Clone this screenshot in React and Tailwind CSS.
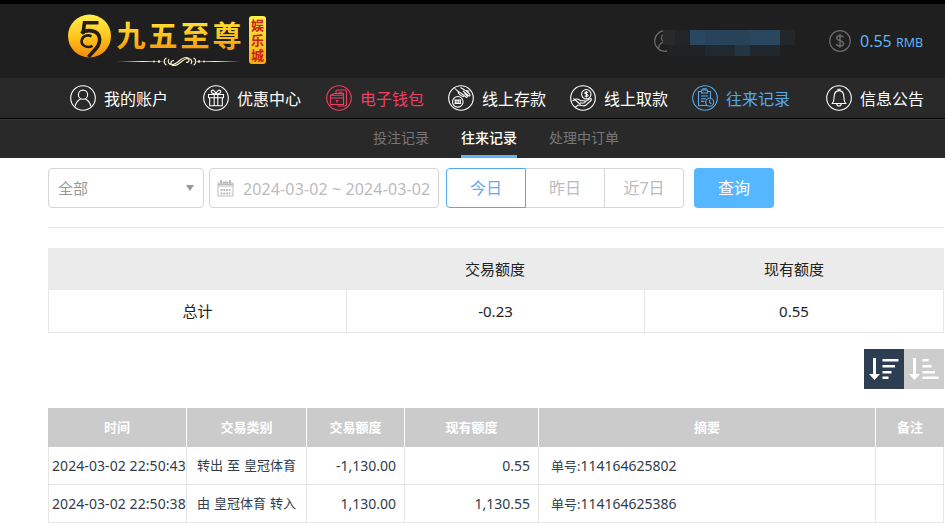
import clsx from 'clsx'

const navItems = [
  { icon: 'user', label: '我的账户', className: 'text-white' },
  { icon: 'gift', label: '优惠中心', className: 'ml-[35px] text-white' },
  { icon: 'wallet', label: '电子钱包', className: 'ml-[25px] text-[#ef3e62]' },
  { icon: 'deposit', label: '线上存款', className: 'ml-6 text-white' },
  { icon: 'withdraw', label: '线上取款', className: 'ml-6 text-white' },
  { icon: 'record', label: '往来记录', className: 'ml-6 text-[#56a9e8]' },
  { icon: 'bell', label: '信息公告', className: 'ml-9 text-white' },
]

const rows = [
  { time: '2024-03-02 22:50:43', type: '转出 至 皇冠体育', amount: '-1,130.00', balance: '0.55', order: '114164625802' },
  { time: '2024-03-02 22:50:38', type: '由 皇冠体育 转入', amount: '1,130.00', balance: '1,130.55', order: '114164625386' },
]

const iconPaths = {
  user: (
    <>
      <circle cx="13" cy="9.7" r="4.6" />
      <path d="M5.2 21.3c.8-4 3-6 5.400-7.200M20.800 21.300c-.8-4-3-6-5.400-7.200" />
    </>
  ),
  gift: (
    <>
      <path d="M5.500 9.500h15v3.300h-15zM6.700 12.800h12.600v8H6.700zM11.200 9.500v11.300M14.800 9.500v11.300" />
      <path d="M13 9.200C10 9 7.200 7.500 8.500 5.700c1.500-1.500 4 .8 4.500 3.500 .5-2.700 3-5 4.500-3.500 1.300 1.800-1.500 3.300-4.500 3.500z" />
    </>
  ),
  wallet: (
    <>
      <path d="M10 8V6.500Q10 5 11.500 5h7.500q1.500 0 1.500 1.500v13Q20.500 21 19 21h-7.500" />
      <path d="M4.500 10.300h13v9.200h-13zM4.500 13h13M12.500 7.300h4M10 15.500h2.500M11 15.500v2.200" />
      <path d="M4.500 10.300L8.500 8.500h9V14" />
    </>
  ),
  deposit: (
    <>
      <circle cx="9.800" cy="16.800" r="5.300" />
      <path d="M6.500 15h6.600M6.500 18.500h6.600M7.300 15v3.500M9 15v3.500M10.700 15v3.500M12.400 15v3.500" />
      <path d="M7 3.500c2.200 2.700 4 3.500 6.500 5l4.700 3.700c1.300.6 1.600-.7.700-1.700l-2.400-2.100M15 6l5.500 4.700c1.300.7 2-.3 1.100-1.500L18 5.500M12.500 2.500l4.500 2.800 4.500 1" />
      <path d="M10 6.700c.5 2.800 3.700 4.700 6 5" />
    </>
  ),
  withdraw: (
    <>
      <circle cx="16.300" cy="9.200" r="4.700" />
      <path d="M18 7.700c-.6-1-3.200-1-3.200.4 0 1.500 3.300.8 3.300 2.400 0 1.300-2.700 1.300-3.400.3M16.400 6v6.500" />
      <path d="M2.500 16l3-1.800c2.500-.8 3.500.5 5 1.600h3.500c1.600.2 1.500 2 0 2.200H10M14.800 16.800l5-3c1.500-.5 2.200.7 1.100 1.700l-5.300 4.800q-1 .8-2.500.5l-5-.8-2.800 2.200" />
      <path d="M3.500 13.500l7 6" />
    </>
  ),
  record: (
    <>
      <path d="M9.500 6.500H6.500v14h8.500M15.500 6.500h3V13M9.500 5h6v3h-6zM11 5V3.800h3V5" />
      <path d="M9 11h7M9 13.700h5M9 16.400h3.500" />
      <circle cx="17.700" cy="17.200" r="4" />
      <path d="M17.700 14.800v2.700l1.700 1.300" />
    </>
  ),
  bell: (
    <path d="M6.300 18.500c1.800-2.200 1.800-3 1.800-6.200 0-4 2-6.700 4.900-6.700s4.900 2.700 4.900 6.700c0 3.200 0 4 1.800 6.200zM12 5.600V4.300h2v1.300M10.800 18.700c0 3 4.400 3 4.400 0" />
  ),
}

function NavIcon({ name }) {
  return (
    <svg width="26" height="26" viewBox="0 0 26 26" fill="none" stroke="currentColor" strokeWidth="1.1" className="shrink-0">
      <circle cx="13" cy="13" r="12.300" />
      {iconPaths[name]}
    </svg>
  )
}

function Logo() {
  return (
    <svg width="200" height="56" viewBox="67 12 200 56" className="shrink-0">
      <defs>
        <linearGradient id="gold" x1="0" y1="0" x2="0" y2="1">
          <stop offset="0" stopColor="#fff04a" />
          <stop offset="0.55" stopColor="#ffc21a" />
          <stop offset="1" stopColor="#f58a0c" />
        </linearGradient>
        <linearGradient id="badge" x1="0" y1="0" x2="0" y2="1">
          <stop offset="0" stopColor="#fff04a" />
          <stop offset="1" stopColor="#fbab14" />
        </linearGradient>
        <linearGradient id="line" x1="0" y1="0" x2="1" y2="0">
          <stop offset="0" stopColor="#e9d58a" stopOpacity="0" />
          <stop offset="0.5" stopColor="#fff6cf" />
          <stop offset="1" stopColor="#e9d58a" stopOpacity="0" />
        </linearGradient>
      </defs>
      <circle cx="89.500" cy="36" r="21.500" fill="url(#gold)" />
      <g fill="none" stroke="#221d12">
        <path d="M98.500 22.800H84.500L83 33.500" strokeWidth="3.600" />
        <path d="M81.500 33.500C85 29.500 99.500 28.500 99.700 39.500 99.700 47 94 50 88.500 57" strokeWidth="3.600" />
        <path d="M92.500 45.800C86 49 80.500 44.500 81.800 39.800 83 35.500 88 34.300 91.500 36.300" strokeWidth="2.600" />
      </g>
      <text
        x="116.500 148.500 180.500 212.500"
        y="47"
        fontSize="29"
        fontWeight="700"
        fill="url(#gold)"
        className="font-['Noto_Sans_CJK_SC',sans-serif]"
      >
        九五至尊
      </text>
      <rect x="117" y="61" width="52" height="1" fill="url(#line)" />
      <rect x="189" y="61" width="52" height="1" fill="url(#line)" />
      <g fill="none" stroke="#f7efc8" strokeWidth="1.200">
        <path d="M166.500 58c-3 1-3 6 0 7M169 59c-2 3 0 5.500 3 5.500 6 0 8-7 14-7 4 0 4 5 0 5M193.500 58c3 1 3 6 0 7M191 64c2-3 0-5.500-3-5.500-6 0-8 7-14 7-4 0-4-5 0-5" />
      </g>
      <g fill="#f7efc8">
        <circle cx="154" cy="61.500" r="1" />
        <circle cx="159" cy="61.500" r="1.300" />
        <circle cx="199" cy="61.500" r="1.300" />
        <circle cx="204" cy="61.500" r="1" />
      </g>
      <rect x="249" y="16" width="17" height="48" rx="3" fill="url(#badge)" />
      <text
        x="251 251 251"
        y="30 45 60"
        fontSize="13"
        fontWeight="700"
        fill="#c9200c"
        className="font-['Noto_Sans_CJK_SC',sans-serif]"
      >
        娱乐城
      </text>
    </svg>
  )
}

function Header() {
  return (
    <header className="flex h-[78px] border-t-4 border-black bg-[#1f1f1f] pt-2 pl-[67px]">
      <Logo />
      <div className="ml-[387px] flex h-[58px] items-center">
        <div className="relative h-[26px] w-[141px]">
          <svg width="22" height="22" viewBox="0 0 22 22" fill="none" stroke="#6a6a6a" strokeWidth="1.200" className="mt-0.5">
            <circle cx="11" cy="11" r="10.300" />
            <circle cx="11" cy="8" r="3.600" />
            <path d="M4.500 18c.8-3.300 2.500-5 4.500-6" />
          </svg>
          {/* Masked user name */}
          <div className="absolute top-0.5 left-[9px]">
            <div className="flex h-[15px]">
              <span className="w-3 bg-[#292929]" />
              <span className="w-[15px] bg-[#222426]" />
              <span className="w-[15px] bg-[#284761]" />
              <span className="w-[15px] bg-[#29445a]" />
              <span className="w-[30px] bg-[#27435a]" />
              <span className="w-[15px] bg-[#294860]" />
              <span className="w-[15px] bg-[#29475f]" />
              <span className="w-[15px] bg-[#22272c]" />
            </div>
            <div className="flex h-[11px] pl-1">
              <span className="w-[38px] bg-[#202224]" />
              <span className="w-[30px] bg-[#202930]" />
              <span className="w-[15px] bg-[#243542]" />
              <span className="w-[30px] bg-[#20272d]" />
            </div>
          </div>
        </div>
        <svg width="22" height="22" viewBox="0 0 22 22" fill="none" stroke="#6a6a6a" strokeWidth="1.200" className="ml-[34px]">
          <circle cx="11" cy="11" r="10.300" />
          <path d="M14.500 7.500C13.500 5 7.800 5.200 7.800 8c0 3.200 6.800 2.400 6.800 5.800 0 3-6.200 3-7.200.2M11 3.800v14" strokeWidth="1.500" />
        </svg>
        <span className="ml-[9px] text-[16px] text-[#5bb4f5]">
          0.55 <span className="text-[12.5px]">RMB</span>
        </span>
      </div>
    </header>
  )
}

function SubNav() {
  return (
    <div className="flex h-[39px] border-t border-[#353535] bg-[#292929] pl-[373px] text-[14px] leading-[35px] text-[#777]">
      <span className="w-14">投注记录</span>
      <span className="ml-8 h-[38px] w-14 border-b-3 border-[#5eb3f5] font-medium text-white">往来记录</span>
      <span className="ml-8">处理中订单</span>
    </div>
  )
}

function Filters() {
  return (
    <div className="flex h-10 text-[16px] text-[#bbb]">
      <div className="flex w-[156px] items-center justify-between rounded-[4px] border border-[#d6d6d6] px-[9px] text-[15px] text-[#999]">
        全部
        <svg width="8" height="6" viewBox="0 0 8 6" fill="#999">
          <path d="M0 0h8L4 6z" />
        </svg>
      </div>
      <div className="ml-[5px] flex w-[230px] items-center rounded-[4px] border border-[#d6d6d6] pl-[7px] whitespace-nowrap">
        <svg width="17" height="17" viewBox="0 0 17 17" fill="none" stroke="#bbb" className="shrink-0">
          <path d="M1 3h15v13H1zM1 4.500h15M1 6h15" />
          <path d="M4 0v4M13 0v4" strokeWidth="2" />
          <path d="M6 2.500h5" strokeWidth="2" />
          <path d="M3.500 10h10M3.500 13.500h10" strokeWidth="2.200" strokeDasharray="2 .8" />
        </svg>
        <span className="ml-[9px] pt-px tracking-[0.12px]">2024-03-02 ~ 2024-03-02</span>
      </div>
      <div className="ml-[7px] flex text-center leading-[38px]">
        <button className="w-20 rounded-l-[4px] border border-[#55a9ee] text-[#68acec]">今日</button>
        <button className="w-[79px] border-y border-r border-[#d6d6d6]">昨日</button>
        <button className="w-[79px] rounded-r-[4px] border-y border-r border-[#d6d6d6]">近7日</button>
      </div>
      <button className="ml-2.5 w-20 rounded-[4px] bg-[#54b7ff] text-white">查询</button>
    </div>
  )
}

function Summary() {
  return (
    <div className="mt-5 text-center text-[15px] text-[#222]">
      <div className="grid h-[42px] grid-cols-[298px_298px_300px] bg-[#ebebeb] leading-[42px]">
        <span />
        <span>交易额度</span>
        <span>现有额度</span>
      </div>
      <div className="grid h-[43px] grid-cols-[298px_298px_299px] border-b border-l border-[#e6e6e6] leading-[42px]">
        <span className="border-r border-[#e6e6e6]">总计</span>
        <span className="border-r border-[#e6e6e6]">-0.23</span>
        <span className="border-r border-[#e6e6e6]">0.55</span>
      </div>
    </div>
  )
}

function SortButtons() {
  return (
    <div className="mt-4 flex h-10 justify-end">
      {['desc', 'asc'].map((dir) => (
        <button key={dir} className={clsx('h-10 w-10', dir === 'desc' ? 'bg-[#2d3e52]' : 'bg-[#ccc]')}>
          <svg width="40" height="40" viewBox="0 0 40 40" fill="#fff">
            <path d="M9 9h3v16h4l-5.500 6L5 25h4z" />
            {dir === 'desc' ? (
              <path d="M18.500 10h16v2.500h-16zM18.500 16h12.500v2.500H18.500zM18.500 22h9v2.500h-9zM18.500 27.500h6V30h-6z" />
            ) : (
              <path d="M18.500 10h6v2.500h-6zM18.500 16h9v2.500h-9zM18.500 22h12.500v2.500H18.500zM18.500 27.500h16V30h-16z" />
            )}
          </svg>
        </button>
      ))}
    </div>
  )
}

function Records() {
  const heads = ['时间', '交易类别', '交易额度', '现有额度', '摘要', '备注']

  return (
    <div className="mt-[19px] text-[13px] text-[#2f3d4c]">
      <div className="grid h-[39px] grid-cols-[139px_120px_98px_134px_337px_68px] bg-[#cbcbcb] text-center leading-[39px] font-bold text-white">
        {heads.map((head) => (
          <span key={head} className="border-r border-white last:border-r-0">
            {head}
          </span>
        ))}
      </div>
      {rows.map((row) => (
        <div
          key={row.time}
          className="grid h-[38px] grid-cols-[139px_120px_98px_134px_337px_68px] border-b border-[#e6e6e6] leading-[37px] whitespace-nowrap *:border-r *:border-[#e6e6e6]"
        >
          <span className="border-l pl-[3px] text-[14px] tracking-[0.08px]">{row.time}</span>
          <span className="pl-2.5 [word-spacing:0.6px]">{row.type}</span>
          <span className="pr-2 text-right text-[14px]">{row.amount}</span>
          <span className="pr-2 text-right text-[14px]">{row.balance}</span>
          <span className="pl-3">
            单号:<span className="text-[14px]">{row.order}</span>
          </span>
          <span />
        </div>
      ))}
    </div>
  )
}

export default function App() {
  return (
    <div className="h-[524px] w-[945px] overflow-hidden bg-white font-['Noto_Sans','Noto_Sans_CJK_SC',sans-serif]">
      <Header />
      <nav className="flex h-[41px] items-center border-b border-black bg-[#292929] pl-[70px] text-[16px]">
        {navItems.map((item) => (
          <a key={item.label} className={clsx('flex items-center gap-2 whitespace-nowrap', item.className)}>
            <NavIcon name={item.icon} />
            <span className="pt-0.5">{item.label}</span>
          </a>
        ))}
      </nav>
      <SubNav />
      <main className="ml-12 w-[896px] pt-2.5">
        <Filters />
        <div className="mt-[19px] border-b border-[#e6e6e6]" />
        <Summary />
        <SortButtons />
        <Records />
      </main>
    </div>
  )
}
